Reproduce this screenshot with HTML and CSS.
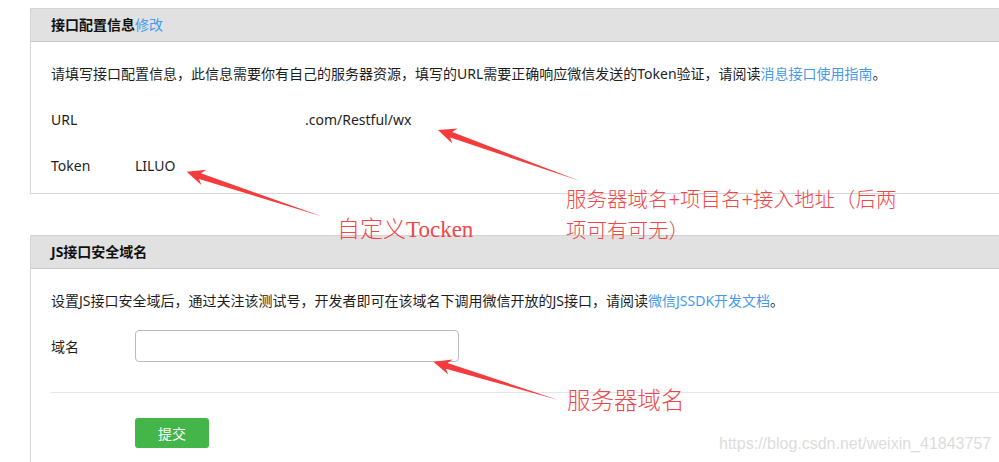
FILE: index.html
```html
<!DOCTYPE html>
<html lang="zh-CN">
<head>
<meta charset="utf-8">
<title>接口配置</title>
<link rel="stylesheet" href="styles.css">
</head>
<body>
<div class="page">
  <section class="panel panel-first">
    <div class="panel-head">接口配置信息<a class="link" href="#">修改</a></div>
    <div class="panel-body">
      <div class="row">请填写接口配置信息，此信息需要你有自己的服务器资源，填写的URL需要正确响应微信发送的Token验证，请阅读<a class="link" href="#">消息接口使用指南</a>。</div>
      <div class="row"><span class="label">URL</span><span class="value url-value">.com/Restful/wx</span></div>
      <div class="row"><span class="label">Token</span><span class="value">LILUO</span></div>
    </div>
  </section>

  <section class="panel panel-second">
    <div class="panel-head">JS接口安全域名</div>
    <div class="panel-body panel-body-tall">
      <div class="row">设置JS接口安全域后，通过关注该测试号，开发者即可在该域名下调用微信开放的JS接口，请阅读<a class="link" href="#">微信JSSDK开发文档</a>。</div>
      <div class="row"><span class="label">域名</span><input class="field" type="text"></div>
      <div class="divider"></div>
      <div class="actions"><button class="btn" type="button">提交</button></div>
    </div>
  </section>
</div>

<div class="overlay">
  <svg class="arrows" width="999" height="462" viewBox="0 0 999 462">
    <polygon points="438,130 457.6,128.6 452.2,132 580,181 450.2,137.6 452.2,143.6"/>
    <polygon points="186.7,171.7 206.3,169.7 200.9,173.3 323,216.7 199.1,179 201.3,184.9"/>
    <polygon points="433.3,361.7 452.8,359.4 447.6,362.9 558.3,400 445.8,368.7 448.2,374.6"/>
  </svg>
  <div class="note note-url">服务器域名+项目名+接入地址（后两<br>项可有可无）</div>
  <div class="note note-token">自定义Tocken</div>
  <div class="note note-domain">服务器域名</div>
  <div class="watermark">https://blog.csdn.net/weixin_41843757</div>
</div>
</body>
</html>
```
FILE: styles.css
```css
html, body {
  margin: 0;
  padding: 0;
  background: #ffffff;
}
body {
  position: relative;
  width: 999px;
  height: 462px;
  overflow: hidden;
  font-family: "Noto Sans", "Noto Sans CJK SC", sans-serif;
  font-size: 14px;
  color: #1e1e1e;
}
.page {
  padding: 8px 0 0 30px;
}
.panel {
  width: 969px;
  border-top: 1px solid #d2d2d2;
  border-left: 1px solid #d6d6d6;
  background: #ffffff;
}
.panel-first {
  border-bottom: 1px solid #d6d6d6;
}
.panel-second {
  margin-top: 41px;
}
.panel-head {
  height: 32px;
  line-height: 32px;
  padding-left: 20px;
  background: #e1e1e1;
  border-bottom: 1px solid #c9c9c9;
  font-weight: bold;
  color: #111111;
}
.panel-head .link {
  font-weight: normal;
}
.link {
  color: #459ae9;
  text-decoration: none;
}
.panel-body {
  padding: 8px 0 5px 20px;
}
.panel-body-tall {
  padding-bottom: 14px;
}
.row {
  height: 46px;
  display: flex;
  align-items: center;
  white-space: nowrap;
}
.label {
  width: 84px;
  flex: none;
}
.url-value {
  padding-left: 170px;
}
.field {
  width: 324px;
  height: 32px;
  box-sizing: border-box;
  border: 1px solid #bbbbbb;
  border-radius: 4px;
  margin: 0;
  padding: 0 8px;
  background: #ffffff;
}
.divider {
  margin-top: 23px;
  border-top: 1px solid #e6e6e6;
}
.actions {
  padding: 25px 0 0 84px;
}
.btn {
  display: block;
  width: 74px;
  height: 30px;
  border: none;
  border-radius: 3px;
  background: #44b549;
  color: #ffffff;
  font-family: "Noto Sans CJK SC", sans-serif;
  font-size: 14px;
  padding: 0;
}
.overlay {
  position: absolute;
  left: 0;
  top: 0;
  width: 999px;
  height: 462px;
  pointer-events: none;
}
.arrows {
  position: absolute;
  left: 0;
  top: 0;
}
.arrows polygon {
  fill: #f53c3c;
}
.note {
  position: absolute;
  color: #f2464a;
  font-family: "Liberation Serif", "Noto Sans CJK SC", serif;
  font-weight: 300;
  white-space: nowrap;
}
.note-url {
  left: 566px;
  top: 185px;
  font-size: 20.5px;
  line-height: 31px;
}
.note-token {
  left: 337px;
  top: 214px;
  font-size: 23px;
  line-height: 32px;
}
.note-domain {
  left: 567px;
  top: 385px;
  font-size: 23.5px;
  line-height: 32px;
}
.watermark {
  position: absolute;
  left: 719px;
  top: 433px;
  font-family: "Liberation Sans", sans-serif;
  font-size: 16px;
  line-height: 22px;
  color: #dcdcdc;
  white-space: nowrap;
}
```
